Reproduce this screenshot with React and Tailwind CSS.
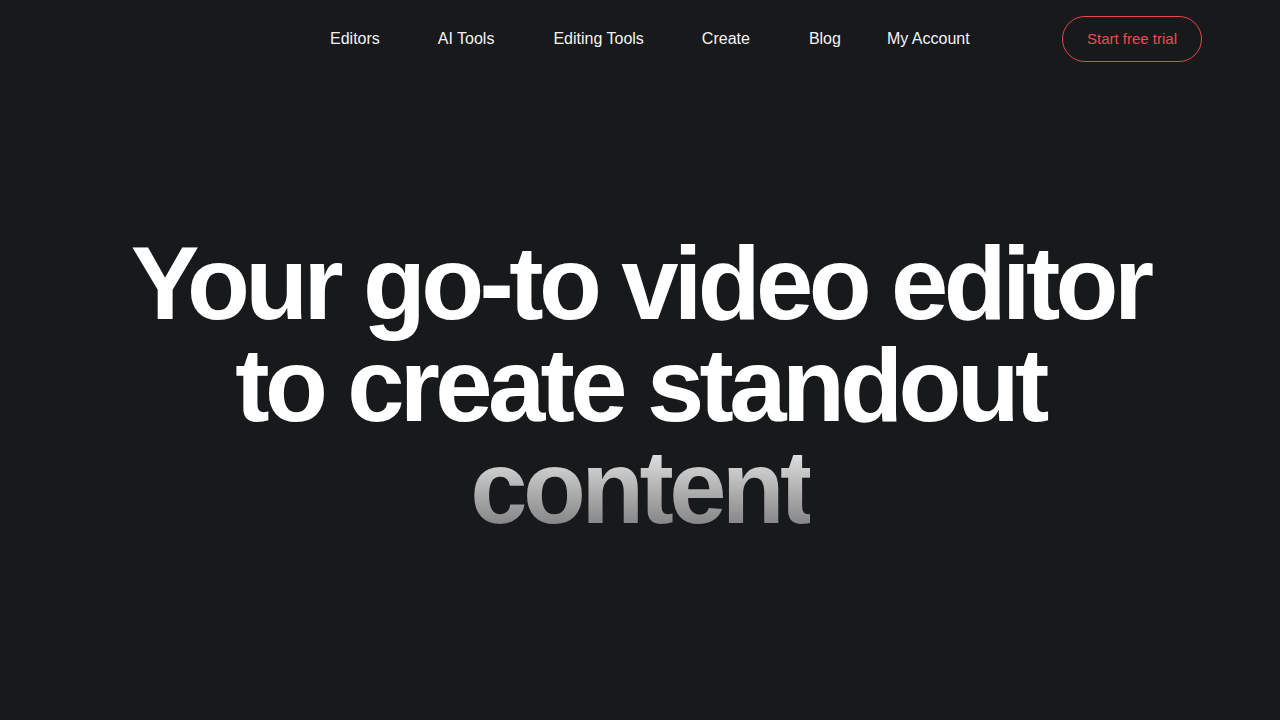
import React from 'react';

// ── Nav config ────────────────────────────────────────────────────────────────
const NAV = [
    { label: 'Editors', cls: 'mr-[58px]' },
    { label: 'AI Tools', cls: 'mr-[59px]' },
    { label: 'Editing Tools', cls: 'mr-[58px]' },
    { label: 'Create', cls: 'mr-[59px]' },
    { label: 'Blog', cls: 'mr-[46px]' },
    { label: 'My Account', cls: '' },
];

const App = () => {
    return (
        <div className="min-h-screen w-full bg-[#18191b] font-['Liberation_Sans',Arial,sans-serif] text-white">
            <header className="h-[78px] flex items-center pl-[330px] pr-[78px]">
                <nav className="flex items-center text-[16px] text-[#f3f3f3]">
                    {NAV.map((n) => (
                        <a key={n.label} href="#" className={n.cls}>{n.label}</a>
                    ))}
                </nav>
                <button className="ml-auto h-[46px] w-[140px] rounded-full border border-[#e5484d] text-[#ef4a4f] text-[15px]">
                    Start free trial
                </button>
            </header>

            <main className="flex justify-center pt-[155px]">
                <h1 className="text-center font-bold text-[103px] leading-[102px] tracking-[-0.045em]">
                    Your go-to video editor<br />
                    to create standout<br />
                    <span className="bg-gradient-to-b from-white to-[#6e6e70] bg-clip-text text-transparent">content</span>
                </h1>
            </main>
        </div>
    );
};

export default App;
